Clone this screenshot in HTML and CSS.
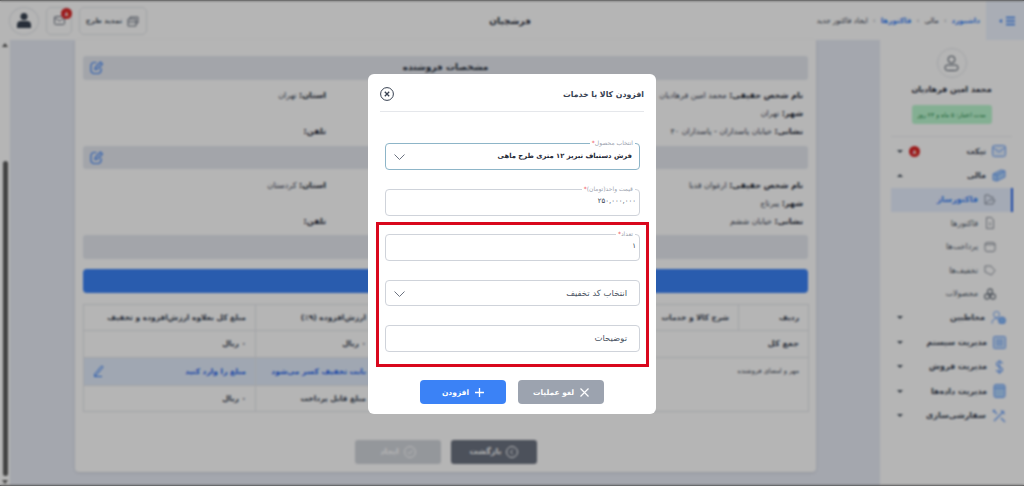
FILE: index.html
```html
<!DOCTYPE html>
<html lang="fa" dir="rtl">
<head>
  <meta charset="UTF-8" />
  <title>فرشچیان</title>
  <link rel="stylesheet" href="styles.css">
</head>
<body>
  <header class="topbar">
    <div class="topbar__start">
      <button class="menu-toggle">
        <svg width="11" height="10" viewBox="0 0 11 10"><path d="M1 1.500h9M1 5h9M1 8.500h9" stroke="#3b82f6" stroke-width="1.400"/></svg>
        <span class="menu-toggle__arrow"></span>
      </button>
      <nav class="crumbs">
        <a>داشبورد</a><i>›</i><span>مالی</span><i>›</i><a>فاکتورها</a><i>›</i><span>ایجاد فاکتور جدید</span>
      </nav>
    </div>
    <div class="topbar__title">فرشچیان</div>
    <div class="topbar__end">
      <button class="tool-btn tool-btn--wide">
        <svg width="13" height="12" viewBox="0 0 13 12" fill="none" stroke="#6b7280"><path d="M1 4h8v7H1zM3 4V2h8v6H9M1 7h8"/></svg>
        تمدید طرح
      </button>
      <button class="tool-btn">
        <svg width="11" height="9" viewBox="0 0 11 9" fill="none" stroke="#6b7280"><rect x=".5" y=".5" width="10" height="8" rx="1"/><path d="M.5 1.500 5.500 5l5-3.500"/></svg>
        <span class="tool-btn__badge">۸</span>
      </button>
      <div class="avatar">
        <svg width="14" height="15" viewBox="0 0 14 15" fill="#374151"><circle cx="7" cy="3.500" r="3.500"/><path d="M0 15v-3.500C0 9 2 8 4 8h6c2 0 4 1 4 3.500V15z"/></svg>
      </div>
    </div>
  </header>

  <div class="layout">
    <aside class="sidebar">
      <div class="profile">
        <div class="profile__pic">
          <svg width="15" height="16" viewBox="0 0 15 16" fill="none" stroke="#4b5563"><circle cx="7.500" cy="4.500" r="3.500"/><rect x="1" y="10" width="13" height="5.500" rx="2.500"/></svg>
        </div>
        <div class="profile__name">محمد امین فرهادیان</div>
        <div class="profile__plan">مدت اعتبار: ۵ ماه و ۲۳ روز</div>
      </div>
      <ul class="side-menu">
        <li class="side-menu__item">
          <svg width="14" height="12" viewBox="0 0 14 12" fill="#dbeafe" stroke="#3b82f6"><rect x=".5" y=".5" width="13" height="11" rx="2"/><path d="M1 2.500 7 7l6-4.500" fill="none"/></svg>
          <span>تیکت</span><b class="side-menu__badge">۸</b><em class="caret"></em>
        </li>
        <li class="side-menu__item">
          <svg width="14" height="13" viewBox="0 0 14 13" fill="#93c5fd" stroke="#3b82f6"><path d="M1 5l8-4 4 1v6l-8 4-4-1z"/><path d="M5 6v6M5 6l8-4M1 5l4 1" fill="none"/></svg>
          <span>مالی</span><em class="caret caret--up"></em>
        </li>
        <li class="side-menu__item side-menu__item--sub is-active">
          <svg width="12" height="11" viewBox="0 0 12 11" fill="none" stroke="#6b7280"><path d="M1 10V1h4l1 2h3v2M1 10h8l2-4H5z"/></svg>
          <span>فاکتورساز</span>
        </li>
        <li class="side-menu__item side-menu__item--sub">
          <svg width="12" height="12" viewBox="0 0 12 12" fill="none" stroke="#6b7280"><path d="M2.500.5h5l2 2.500v8.500h-7zM6 5v4"/></svg>
          <span>فاکتورها</span>
        </li>
        <li class="side-menu__item side-menu__item--sub">
          <svg width="12" height="11" viewBox="0 0 12 11" fill="none" stroke="#6b7280"><rect x="1" y="1.500" width="10" height="9" rx="2"/><path d="M1 3.500h10"/></svg>
          <span>پرداخت‌ها</span>
        </li>
        <li class="side-menu__item side-menu__item--sub">
          <svg width="12" height="11" viewBox="0 0 12 11" fill="none" stroke="#6b7280"><path d="M1 1h6l4 4.500L7.500 10 1 7z"/></svg>
          <span>تخفیف‌ها</span>
        </li>
        <li class="side-menu__item side-menu__item--sub">
          <svg width="12" height="12" viewBox="0 0 12 12" fill="none" stroke="#4b5563" stroke-width="1.300"><circle cx="6" cy="3.500" r="2.500"/><circle cx="3" cy="8.500" r="2.500"/><circle cx="9" cy="8.500" r="2.500"/></svg>
          <span>محصولات</span>
        </li>
        <li class="side-menu__item">
          <svg width="15" height="13" viewBox="0 0 15 13" fill="none" stroke="#3b82f6"><circle cx="5.500" cy="3.500" r="3"/><path d="M1 12.500c0-3 1.500-5 4.500-5 1 0 2 .3 2.500 1"/><circle cx="11" cy="9.500" r="3.500" fill="#60a5fa"/></svg>
          <span>مخاطبین</span><em class="caret"></em>
        </li>
        <li class="side-menu__item">
          <svg width="13" height="13" viewBox="0 0 13 13" fill="#bfdbfe" stroke="#3b82f6"><rect x=".5" y=".5" width="12" height="12" rx="1"/><path d="M3 4h7M3 6.500h7M3 9h7"/></svg>
          <span>مدیریت سیستم</span><em class="caret"></em>
        </li>
        <li class="side-menu__item">
          <svg width="13" height="14" viewBox="0 0 13 14" fill="none" stroke="#3b82f6" stroke-width="1.200"><path d="M9.500 3.500C9 2 8 1.500 6.500 1.500 5 1.500 3.500 2.300 3.500 4c0 3.500 6 2 6 5.500 0 1.700-1.500 2.500-3 2.500s-2.700-.7-3-2.200M6.500 0v14"/></svg>
          <span>مدیریت فروش</span><em class="caret"></em>
        </li>
        <li class="side-menu__item">
          <svg width="13" height="14" viewBox="0 0 13 14" fill="#93c5fd" stroke="#3b82f6"><rect x="1" y=".5" width="11" height="13" rx="2"/><path d="M1 4h11" fill="none"/></svg>
          <span>مدیریت داده‌ها</span><em class="caret"></em>
        </li>
        <li class="side-menu__item">
          <svg width="14" height="14" viewBox="0 0 14 14" fill="none" stroke="#3b82f6" stroke-width="1.300"><path d="M2 12 12 2M9 1.500l3.500 3.500M1 1l4 4M9 9l4 4M3 1 1 3"/></svg>
          <span>سفارشی‌سازی</span><em class="caret"></em>
        </li>
      </ul>
    </aside>

    <main class="content">
      <section class="card">
        <div class="bar">
          <span class="bar__title">مشخصات فروشنده</span>
          <svg class="bar__edit" width="13" height="13" viewBox="0 0 13 13" fill="none" stroke="#3b82f6" stroke-width="1.200"><path d="M11 7v2.500A3 3 0 0 1 8 12.500H4A3 3 0 0 1 1 9.500v-5a3 3 0 0 1 3-3h2.500"/><path d="M5 8.500l.5-2.500L10.500 1l2 2-5 5z"/></svg>
        </div>
        <div class="info">
          <div class="info__cell"><b>نام شخص حقیقی:</b> محمد امین فرهادیان</div>
          <div class="info__cell"><b>استان:</b> تهران</div>
          <div class="info__cell"><b>شهر:</b> تهران</div>
          <div class="info__cell"></div>
          <div class="info__cell"><b>نشانی:</b> خیابان پاسداران - پاسداران ۴۰</div>
          <div class="info__cell"><b>تلفن:</b></div>
        </div>
        <div class="bar">
          <span class="bar__title">مشخصات خریدار</span>
          <svg class="bar__edit" width="13" height="13" viewBox="0 0 13 13" fill="none" stroke="#3b82f6" stroke-width="1.200"><path d="M11 7v2.500A3 3 0 0 1 8 12.500H4A3 3 0 0 1 1 9.500v-5a3 3 0 0 1 3-3h2.500"/><path d="M5 8.500l.5-2.500L10.500 1l2 2-5 5z"/></svg>
        </div>
        <div class="info">
          <div class="info__cell"><b>نام شخص حقیقی:</b> ارغوان قدبا</div>
          <div class="info__cell"><b>استان:</b> کردستان</div>
          <div class="info__cell"><b>شهر:</b> پیرتاج</div>
          <div class="info__cell"></div>
          <div class="info__cell"><b>نشانی:</b> خیابان ششم</div>
          <div class="info__cell"><b>تلفن:</b></div>
        </div>
        <div class="bar"></div>
        <div class="add-bar"></div>
        <table class="items">
          <colgroup><col class="items__c1"><col class="items__c2"><col class="items__c3"><col></colgroup>
          <tr class="items__head">
            <th>ردیف</th><th>شرح کالا و خدمات</th><th>ارزش‌افزوده (۹٪)</th><th>مبلغ کل بعلاوه ارزش‌افزوده و تخفیف</th>
          </tr>
          <tr class="items__total">
            <th colspan="2">جمع کل</th><td>۰ ریال</td><td>۰ ریال</td>
          </tr>
          <tr class="items__discount">
            <td colspan="2" rowspan="2" class="items__sign">مهر و امضای فروشنده</td>
            <td class="items__blue">بابت تخفیف کسر می‌شود</td>
            <td class="items__blue">
              <div class="items__edit">
                <span>مبلغ را وارد کنید</span>
                <svg width="11" height="12" viewBox="0 0 11 12" fill="none" stroke="#3b82f6"><path d="M1 10 8 1.500c1-1 2.500 0 1.700 1.200L3 10.500 1 10zM1 11.500h8"/></svg>
              </div>
            </td>
          </tr>
          <tr class="items__pay">
            <th>مبلغ قابل پرداخت</th><td>۰ ریال</td>
          </tr>
        </table>
        <div class="card__actions">
          <button class="page-btn page-btn--back">
            <svg width="12" height="12" viewBox="0 0 12 12" fill="none" stroke="#fff"><circle cx="6" cy="6" r="5.500"/><path d="M7 3.500 4.500 6 7 8.500"/></svg>
            بازگشت
          </button>
          <button class="page-btn page-btn--save">
            <svg width="12" height="12" viewBox="0 0 12 12" fill="none" stroke="#fff"><circle cx="6" cy="6" r="5.500"/><path d="M3.500 6 5.500 8l3-4"/></svg>
            ایجاد
          </button>
        </div>
      </section>
    </main>

    <div class="scroll">
      <span class="scroll__up"></span>
      <span class="scroll__thumb"></span>
      <span class="scroll__down"></span>
    </div>
  </div>

  <div class="overlay">
    <div class="modal">
      <div class="modal__head">
        <h2>افزودن کالا یا خدمات</h2>
        <button class="modal__close">
          <svg width="14" height="14" viewBox="0 0 14 14" fill="none" stroke="#374151"><circle cx="7" cy="7" r="6.400"/><path d="M4.800 4.800l4.400 4.400M9.200 4.800l-4.400 4.400" stroke-width="1.300"/></svg>
        </button>
      </div>
      <div class="modal__form">
        <div class="field field--focus field--strong">
          <label>انتخاب محصول<u>*</u></label>
          <span>فرش دستباف تبریز ۱۲ متری طرح ماهی</span>
          <svg class="field__chev" width="11" height="6" viewBox="0 0 11 6" fill="none" stroke="#6b7280"><path d="M.5.500l5 5 5-5"/></svg>
        </div>
        <div class="field field--num">
          <label>قیمت واحد(تومان)<u>*</u></label>
          <span>۲۵۰,۰۰۰,۰۰۰</span>
        </div>
        <div class="highlight">
          <div class="field field--num">
            <label>تعداد<u>*</u></label>
            <span>۱</span>
          </div>
          <div class="field field--plain">
            <span>انتخاب کد تخفیف</span>
            <svg class="field__chev" width="11" height="6" viewBox="0 0 11 6" fill="none" stroke="#6b7280"><path d="M.5.500l5 5 5-5"/></svg>
          </div>
          <div class="field field--plain">
            <span>توضیحات</span>
          </div>
        </div>
      </div>
      <div class="modal__foot">
        <button class="modal-btn modal-btn--cancel">
          <svg width="9" height="9" viewBox="0 0 9 9" stroke="#fff" stroke-width="1.200"><path d="M.5.500l8 8M8.500.500l-8 8"/></svg>
          لغو عملیات
        </button>
        <button class="modal-btn modal-btn--add">
          <svg width="9" height="9" viewBox="0 0 9 9" stroke="#fff" stroke-width="1.300"><path d="M4.500 0v9M0 4.500h9"/></svg>
          افزودن
        </button>
      </div>
    </div>
  </div>
</body>
</html>
```

FILE: styles.css
```css
:root {
  --page-bg: #e7ebf5;
  --line: #e5e7eb;
  --blue: #3b82f6;
  --text: #1f2937;
  --muted: #6b7280;
}
* {
  box-sizing: border-box;
  margin: 0;
  padding: 0;
}
html, body {
  height: 100%;
}
body {
  display: flex;
  flex-direction: column;
  height: 100vh;
  overflow: hidden;
  font-family: "DejaVu Sans", "Noto Sans", sans-serif;
  font-size: 8px;
  color: var(--text);
  background: #fff;
  border-top: 1px solid #6d6d6d;
  border-bottom: 1px solid #6d6d6d;
}
button {
  font-family: inherit;
  border: none;
  background: none;
}

/* top bar */
.topbar {
  display: grid;
  grid-template-columns: 1fr auto 1fr;
  align-items: center;
  height: 39px;
  flex: none;
  background: #fff;
}
.topbar__start {
  display: flex;
  align-items: center;
  height: 100%;
}
.topbar__title {
  font-size: 9px;
  font-weight: 700;
  padding-right: 4px;
}
.topbar__end {
  display: flex;
  align-items: center;
  justify-content: flex-start;
  flex-direction: row;
  gap: 7px;
  padding-left: 9px;
  justify-self: end;
}
.menu-toggle {
  display: flex;
  align-items: center;
  gap: 3px;
  width: 38px;
  height: 39px;
  padding-right: 8px;
  background: #eef4ff;
}
.menu-toggle__arrow {
  border: 2.500px solid transparent;
  border-left: 0;
  border-right: 3px solid var(--blue);
}
.crumbs {
  display: flex;
  align-items: center;
  gap: 5px;
  margin-right: 6px;
  font-size: 7.200px;
  color: #374151;
}
.crumbs a {
  color: var(--blue);
  font-weight: 700;
}
.crumbs i {
  font-style: normal;
  color: #9ca3af;
}
.tool-btn {
  position: relative;
  display: flex;
  align-items: center;
  justify-content: center;
  gap: 5px;
  width: 26px;
  height: 28px;
  border: 1px solid var(--line);
  border-radius: 5px;
  font-size: 7px;
  font-weight: 700;
  color: #4b5563;
}
.tool-btn--wide {
  width: 68px;
}
.tool-btn__badge {
  position: absolute;
  top: 0;
  left: 14px;
  width: 11px;
  height: 11px;
  border-radius: 50%;
  background: #dc2626;
  color: #fff;
  font-size: 6px;
  line-height: 11px;
  text-align: center;
}
.avatar {
  display: flex;
  align-items: center;
  justify-content: center;
  width: 30px;
  height: 28px;
  border: 1px solid var(--line);
  border-radius: 50%;
}

.layout {
  display: flex;
  flex: 1;
  min-height: 0;
}

/* sidebar */
.sidebar {
  flex: none;
  width: 144px;
  padding-top: 8px;
  background: #fff;
}
.profile {
  display: flex;
  flex-direction: column;
  align-items: center;
  margin: 0 12px 0 11px;
  padding-bottom: 12px;
  border-bottom: 1px solid #f0f1f3;
}
.profile__pic {
  display: flex;
  align-items: center;
  justify-content: center;
  width: 30px;
  height: 30px;
  border: 1px solid var(--line);
  border-radius: 50%;
}
.profile__name {
  margin-top: 5px;
  font-size: 8px;
  font-weight: 700;
  line-height: 14px;
}
.profile__plan {
  width: 80px;
  height: 19px;
  margin-top: 8px;
  border-radius: 3px;
  background: #bbf7d0;
  color: #15803d;
  font-size: 6px;
  line-height: 19px;
  text-align: center;
}
.side-menu {
  list-style: none;
  margin: 2px 11px 0 11px;
}
.side-menu__item {
  display: flex;
  align-items: center;
  gap: 6px;
  height: 24.500px;
  padding: 0 7px 0 6px;
  font-size: 8px;
  font-weight: 700;
  color: #374151;
}
.side-menu__item > svg {
  flex: none;
  opacity: .75;
}
.side-menu__item--sub {
  height: 23.500px;
  padding-right: 17px;
  font-weight: 400;
  color: #4b5563;
}
.side-menu__item.is-active {
  background: #e8f0ff;
  border-right: 2px solid #2563eb;
  padding-right: 15px;
  color: var(--blue);
  font-weight: 700;
}
.side-menu__badge {
  width: 11px;
  height: 11px;
  margin-right: auto;
  border-radius: 50%;
  background: #dc2626;
  color: #fff;
  font-size: 6px;
  line-height: 11px;
  text-align: center;
}
.caret {
  margin-right: auto;
  border: 3px solid transparent;
  border-bottom: 0;
  border-top: 3px solid #4b5563;
}
.side-menu__badge + .caret {
  margin-right: 0;
}
.caret--up {
  border-top: 0;
  border-bottom: 3px solid #4b5563;
}

/* page body */
.content {
  flex: 1;
  min-width: 0;
  padding: 0 64px 13px 65px;
  background: var(--page-bg);
}
.card {
  height: 100%;
  padding: 16px 8px 0;
  background: #fff;
  border-radius: 0 0 4px 4px;
  box-shadow: 0 1px 3px rgba(0, 0, 0, .1);
}
.bar {
  display: flex;
  align-items: center;
  justify-content: center;
  position: relative;
  height: 23.500px;
  border-radius: 3px;
  background: #e6e9f0;
}
.bar__title {
  margin-bottom: 2px;
  font-size: 9px;
  font-weight: 700;
}
.bar__edit {
  position: absolute;
  left: 7px;
  top: 5px;
}
.info {
  display: grid;
  grid-template-columns: 477px 1fr;
  grid-auto-rows: 18px;
  align-items: center;
  padding: 7px 5px 5px;
  font-size: 8px;
  color: #374151;
}
.info__cell b {
  color: var(--text);
}
.add-bar {
  height: 24px;
  margin: 10px 0 11px;
  border-radius: 4px;
  background: var(--blue);
}
.items {
  width: 726px;
  margin-right: -1px;
  border-collapse: collapse;
  table-layout: fixed;
  font-size: 7.500px;
  color: #374151;
}
.items__c1 { width: 70px; }
.items__c2 { width: 363px; }
.items__c3 { width: 120px; }
.items th, .items td {
  padding: 0 9px;
  border: 1px solid var(--line);
  text-align: right;
  white-space: nowrap;
  overflow: hidden;
}
.items td {
  font-weight: 700;
}
.items__head {
  height: 26px;
}
.items__total {
  height: 27px;
}
.items__discount {
  height: 28px;
}
.items__pay {
  height: 26px;
}
.items__total th:first-child {
  font-size: 8px;
}
.items .items__sign {
  vertical-align: top;
  padding-top: 9px;
  font-size: 6.500px;
  font-weight: 400;
}
.items .items__blue {
  background: #e2ecfb;
  color: #2563eb;
}
.items__edit {
  display: flex;
  align-items: center;
  justify-content: space-between;
}
.card__actions {
  display: flex;
  justify-content: center;
  gap: 10px;
  margin-top: 28px;
  padding-left: 1px;
}
.page-btn {
  display: flex;
  align-items: center;
  justify-content: center;
  gap: 5px;
  width: 86px;
  height: 24px;
  border-radius: 3px;
  color: #fff;
  font-size: 8px;
  font-weight: 700;
}
.page-btn--back { background: #6b7280; }
.page-btn--save { background: #d1d5db; }

/* fake scrollbar of the rtl page */
.scroll {
  display: flex;
  flex-direction: column;
  align-items: center;
  flex: none;
  width: 10px;
  background: #fff;
  padding: 3px 0 1px;
}
.scroll__up, .scroll__down {
  border: 3px solid transparent;
  border-top: 0;
  border-bottom: 4px solid #5f5f5f;
}
.scroll__down {
  border-bottom: 0;
  border-top: 4px solid #5f5f5f;
}
.scroll__thumb {
  flex: 1;
  width: 5px;
  margin: 114px 0 4px;
  border-radius: 3px;
  background: #5f5f5f;
}

/* modal */
.overlay {
  position: fixed;
  inset: 0;
  display: flex;
  align-items: center;
  justify-content: center;
  background: rgba(0, 0, 0, .29);
  backdrop-filter: blur(1px);
}
.modal {
  display: flex;
  flex-direction: column;
  width: 288px;
  height: 340px;
  margin-top: 2px;
  border-radius: 6px;
  background: #fff;
}
.modal__head {
  display: flex;
  align-items: center;
  justify-content: space-between;
  height: 38px;
  margin: 0 12px;
  padding-top: 3px;
  border-bottom: 1px solid #e5e7eb;
}
.modal__head h2 {
  font-size: 7.800px;
  font-weight: 700;
  color: #374151;
}
.modal__close {
  display: flex;
}
.modal__form {
  display: flex;
  flex-direction: column;
  gap: 19.500px;
  padding: 31px 16px 0 17px;
}
.field {
  position: relative;
  display: flex;
  align-items: center;
  height: 26.500px;
  padding: 0 5px;
  border: 1px solid #cfd3da;
  border-radius: 4px;
  font-size: 8px;
  color: #4b5563;
}
.field label {
  position: absolute;
  top: -5px;
  right: 4px;
  padding: 0 2px;
  background: #fff;
  color: #9ca3af;
  font-size: 6px;
  line-height: 8px;
}
.field label u {
  text-decoration: none;
  color: #ef4444;
}
.field--focus {
  border-color: #8db5c8;
}
.field--strong span {
  padding-right: 2px;
  font-size: 6.800px;
  font-weight: 700;
  color: #1f2937;
}
.field--num {
  padding: 0 3px 3px;
}
.field--num span {
  font-size: 7px;
  color: #374151;
}
.field--plain span {
  padding-right: 7px;
  font-size: 8.500px;
}
.field__chev {
  position: absolute;
  left: 8px;
  top: 10px;
}
.highlight {
  display: flex;
  flex-direction: column;
  gap: 19px;
  margin: -13px -9px 0;
  padding: 9px 6px 12.500px;
  border: 3px solid #d9071d;
}
.modal__foot {
  display: flex;
  justify-content: center;
  gap: 12px;
  margin-top: 13px;
}
.modal-btn {
  display: flex;
  align-items: center;
  justify-content: center;
  gap: 6px;
  width: 86px;
  height: 24px;
  border-radius: 4px;
  color: #fff;
  font-size: 7.500px;
  font-weight: 700;
}
.modal-btn--cancel { background: #9ca3af; }
.modal-btn--add { background: var(--blue); }
```
